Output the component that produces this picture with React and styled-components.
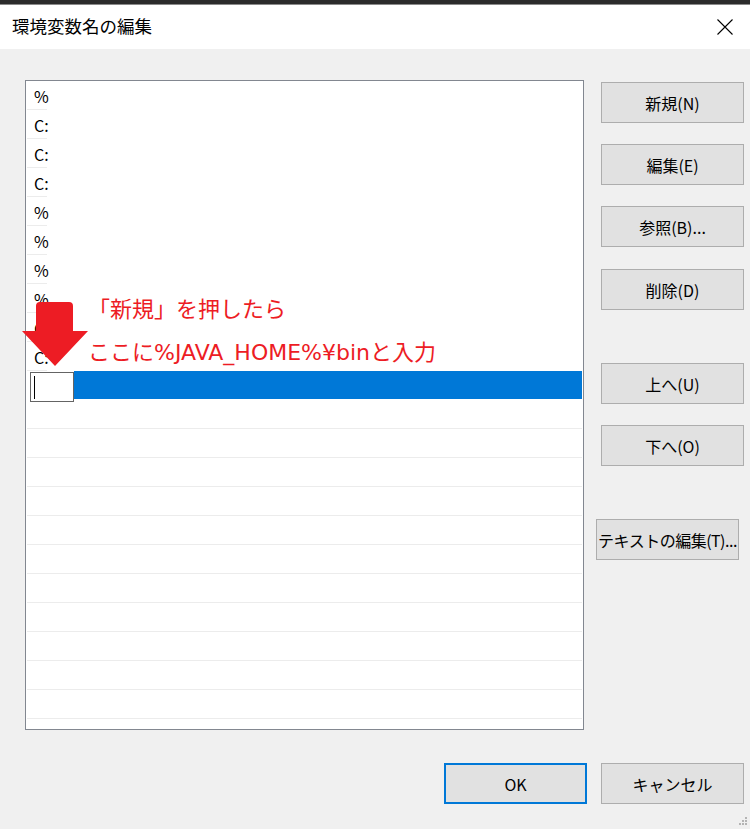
import React from 'react';
import styled, { createGlobalStyle } from 'styled-components';

const GlobalStyle = createGlobalStyle`
  html, body {
    margin: 0;
    padding: 0;
    background: #f0f0f0;
  }
  body {
    font-family: 'Noto Sans CJK JP', 'Noto Sans', sans-serif;
    color: #000;
  }
`;

const Window = styled.div`
  width: 750px;
  height: 829px;
  display: flex;
  flex-direction: column;
  background: #f0f0f0;
  position: relative;
  overflow: hidden;
`;

const TopEdge = styled.div`
  height: 4px;
  background: #2b2b2b;
  border-bottom: 1px solid #8a8a8a;
`;

const TitleBar = styled.div`
  height: 44px;
  background: #fff;
  display: flex;
  align-items: center;
  justify-content: space-between;
  padding: 0 17px 0 12px;
`;

const Title = styled.span`
  font-size: 17.5px;
  line-height: 1;
  margin-top: -3px;
`;

const Body = styled.div`
  display: flex;
  padding: 31px 6px 0 25px;
`;

const ListWrap = styled.div`
  position: relative;
  width: 559px;
  height: 650px;
`;

const ListBox = styled.div`
  box-sizing: border-box;
  width: 100%;
  height: 100%;
  border: 1px solid #828790;
  background: #fff;
  overflow: hidden;
  padding-left: 1px;
`;

const Row = styled.div`
  position: relative;
  height: 28px;
  display: flex;
  align-items: center;
  padding-left: 7px;
  padding-top: 1px;
  box-sizing: border-box;
  font-size: 16px;
  margin-bottom: 1px;

  &::after {
    content: '';
    position: absolute;
    left: 0;
    bottom: -1px;
    height: 1px;
    width: ${(p) => (p.$short ? '20px' : '555px')};
    background: #ececec;
  }
`;

const SelectedRow = styled.div`
  height: 28px;
  display: flex;
  margin-bottom: 1px;
  padding-left: 3px;
`;

const EditBox = styled.div`
  box-sizing: border-box;
  width: 44px;
  height: 30px;
  margin-top: 1px;
  border: 1px solid #646464;
  background: #fff;
  display: flex;
  align-items: center;
  padding-left: 3px;

  &::before {
    content: '';
    width: 1px;
    height: 23px;
    background: #000;
  }
`;

const Selection = styled.div`
  flex: 1;
  height: 28px;
  background: #0078d7;
  margin-right: 1px;
`;

const Arrow = styled.svg`
  position: absolute;
  left: -5px;
  top: 220px;
`;

const Note = styled.div`
  position: absolute;
  left: 63px;
  top: 208px;
  color: #ed1c24;
  font-family: 'DejaVu Sans', 'Noto Sans CJK JP', sans-serif;
  font-size: 22px;
  line-height: 43px;
  white-space: nowrap;
`;

const ButtonColumn = styled.div`
  display: flex;
  flex-direction: column;
  margin-left: 17px;
  padding-top: 2px;
`;

const Button = styled.button`
  box-sizing: border-box;
  width: 143px;
  height: 41px;
  background: #e1e1e1;
  border: ${(p) => (p.$default ? '2px solid #0078d7' : '1px solid #adadad')};
  font-family: inherit;
  font-size: 16px;
  letter-spacing: ${(p) => (p.$tight ? '-0.5px' : 'normal')};
  color: #000;
  padding: 0;
  margin-top: ${(p) => p.$gap || 0}px;
  margin-left: ${(p) => p.$shift || 0}px;
  white-space: nowrap;
`;

const Footer = styled.div`
  display: flex;
  justify-content: flex-end;
  gap: 14px;
  padding: 33px 6px 0 0;
`;

const Grip = styled.svg`
  position: absolute;
  right: 2px;
  bottom: 2px;
`;

const items = ['%', 'C:', 'C:', 'C:', '%', '%', '%', '%', 'C:', 'C:'];

export default function App() {
  return (
    <Window>
      <GlobalStyle />
      <TopEdge />
      <TitleBar>
        <Title>環境変数名の編集</Title>
        <svg width="16" height="16" viewBox="0 0 16 16">
          <path d="M0.5 0.5 L15.5 15.5 M15.5 0.5 L0.5 15.5" stroke="#000" strokeWidth="1.1" fill="none" />
        </svg>
      </TitleBar>
      <Body>
        <ListWrap>
          <ListBox>
            {items.map((t, i) => (
              <Row key={i} $short>
                {t}
              </Row>
            ))}
            <SelectedRow>
              <EditBox />
              <Selection />
            </SelectedRow>
            {Array.from({ length: 12 }).map((_, i) => (
              <Row key={'e' + i} />
            ))}
          </ListBox>
          <Arrow width="72" height="70" viewBox="0 0 72 70">
            <path
              d="M16 6 Q16 2 20 2 L49 2 Q53 2 53 6 L53 31 L68 31 L35 66 L2 31 L16 31 Z"
              fill="#ed1c24"
            />
          </Arrow>
          <Note>
            <div>「新規」を押したら</div>
            <div>ここに%JAVA_HOME%¥binと入力</div>
          </Note>
        </ListWrap>
        <ButtonColumn>
          <Button>新規(N)</Button>
          <Button $gap={21}>編集(E)</Button>
          <Button $gap={21}>参照(B)...</Button>
          <Button $gap={22}>削除(D)</Button>
          <Button $gap={53}>上へ(U)</Button>
          <Button $gap={21}>下へ(O)</Button>
          <Button $gap={53} $shift={-5} $tight>テキストの編集(T)...</Button>
        </ButtonColumn>
      </Body>
      <Footer>
        <Button $default>OK</Button>
        <Button>キャンセル</Button>
      </Footer>
      <Grip width="10" height="10" viewBox="0 0 10 10">
        <g fill="#b4b4b4">
          <rect x="7" y="0" width="2" height="2" />
          <rect x="4" y="3" width="2" height="2" />
          <rect x="7" y="3" width="2" height="2" />
          <rect x="1" y="6" width="2" height="2" />
          <rect x="4" y="6" width="2" height="2" />
          <rect x="7" y="6" width="2" height="2" />
        </g>
      </Grip>
    </Window>
  );
}
